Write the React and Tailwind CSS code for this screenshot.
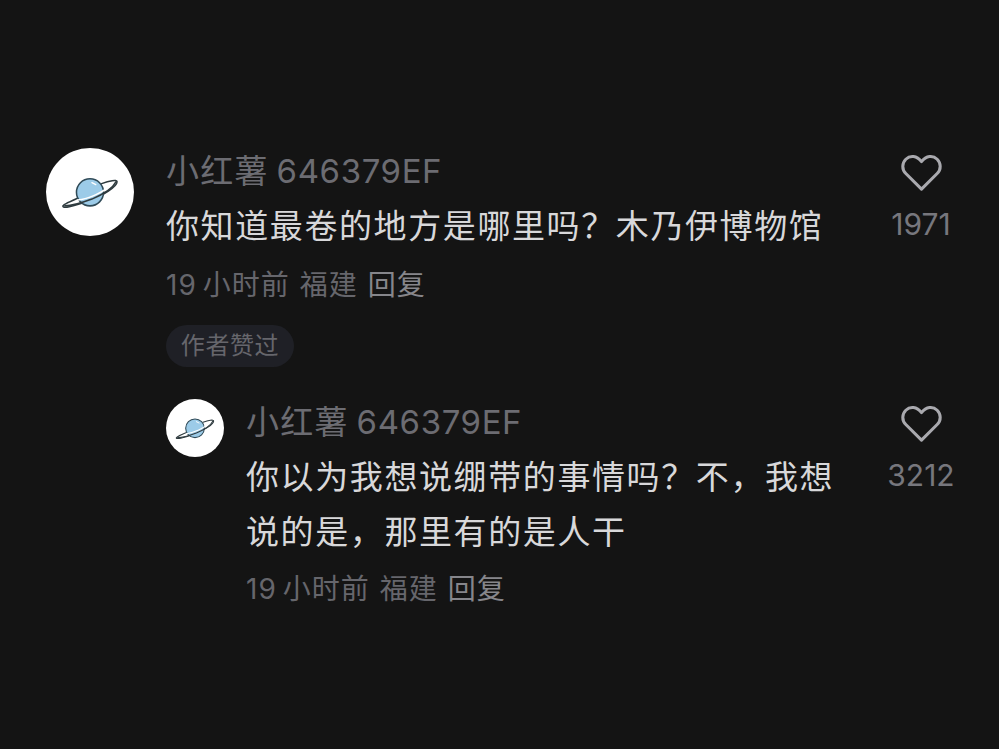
function Planet({ className }) {
  return (
    <svg viewBox="0 0 60 40" className={className} fill="none">
      <path d="M20 25 C10 29 3 32 2 34 C1 37 12 35 28 29 C44 23 58 14 58 9 C58 6.5 50 8 42 11" stroke="#2f3b3f" strokeWidth="1.6" strokeLinecap="round" />
      <circle cx="30" cy="20" r="14" fill="#9ccbe8" stroke="#2f4a57" strokeWidth="1.6" />
      <path d="M17 28 C28 27 44 20 52 12" stroke="#ffffff" strokeWidth="1.6" strokeLinecap="round" />
      <path d="M4 34 C12 34 24 30 32 27 C44 22 54 15 57 9" stroke="#2f3b3f" strokeWidth="1.6" strokeLinecap="round" />
      <path d="M32 10 L36 12" stroke="#ffffff" strokeWidth="1.4" strokeLinecap="round" />
    </svg>
  );
}

function Heart() {
  return (
    <svg viewBox="0 0 44 40" className="h-[38px] w-[43px]" fill="none">
      <path
        d="M22 37 L5.5 20.5 C1 16 1.5 9.5 5.5 5.5 C10 1 17 1.5 22 8 C27 1.5 34 1 38.5 5.5 C42.5 9.5 43 16 38.5 20.5 Z"
        stroke="#a9a9ae"
        strokeWidth="3.2"
        strokeLinejoin="round"
      />
    </svg>
  );
}

function Comment({ avatarBox, planet, gap, lines, metaGap, likes }) {
  return (
    <div className="flex items-start">
      <div className={`flex shrink-0 items-center justify-center rounded-full bg-white ${avatarBox}`}>
        <Planet className={planet} />
      </div>
      <div className={`flex-1 ${gap}`}>
        <div className="flex gap-[8px] text-[33px] leading-[46px] text-[#6c6c72]">
          <span className="tracking-[1.2px]">小红薯</span>
          <span className="tracking-[0.6px]">646379EF</span>
        </div>
        <div className="mt-[5px] text-[33px] leading-[55px] tracking-[1.6px] text-[#d8d8da]">
          {lines.map((l) => (
            <div key={l}>{l}</div>
          ))}
        </div>
        <div className={`flex gap-[10px] text-[28px] leading-[58px] tracking-[1px] text-[#66666c] ${metaGap}`}>
          <span className="flex gap-[6px]">
            <span>19</span>
            <span>小时前</span>
          </span>
          <span>福建</span>
          <span className="text-[#86868b]">回复</span>
        </div>
      </div>
      <div className="mt-[6px] mr-[45px] flex w-[66px] shrink-0 flex-col items-center">
        <Heart />
        <div className="mt-[14px] text-[30px] leading-[36px] text-[#77777d]">{likes}</div>
      </div>
    </div>
  );
}

export default function App() {
  return (
    <div
      className="h-[749px] w-[999px] overflow-hidden bg-[#141414] pt-[148px]"
      style={{ fontFamily: '"Inter", "Noto Sans CJK SC", sans-serif' }}
    >
      <div className="pl-[46px]">
        <Comment
          avatarBox="h-[88px] w-[88px]"
          planet="w-[58px]"
          gap="ml-[32px]"
          lines={['你知道最卷的地方是哪里吗？木乃伊博物馆']}
          metaGap="mt-[2px]"
          likes="1971"
        />
      </div>
      <div className="mt-[11px] ml-[166px] flex h-[42px] w-[128px] items-center justify-center rounded-full bg-[#1f2026] text-[24px] tracking-[0.6px] text-[#66666c]">
        作者赞过
      </div>
      <div className="mt-[32px] pl-[166px]">
        <Comment
          avatarBox="h-[58px] w-[58px]"
          planet="w-[40px]"
          gap="ml-[22px]"
          lines={['你以为我想说绷带的事情吗？不，我想', '说的是，那里有的是人干']}
          metaGap="mt-[0px]"
          likes="3212"
        />
      </div>
    </div>
  );
}
